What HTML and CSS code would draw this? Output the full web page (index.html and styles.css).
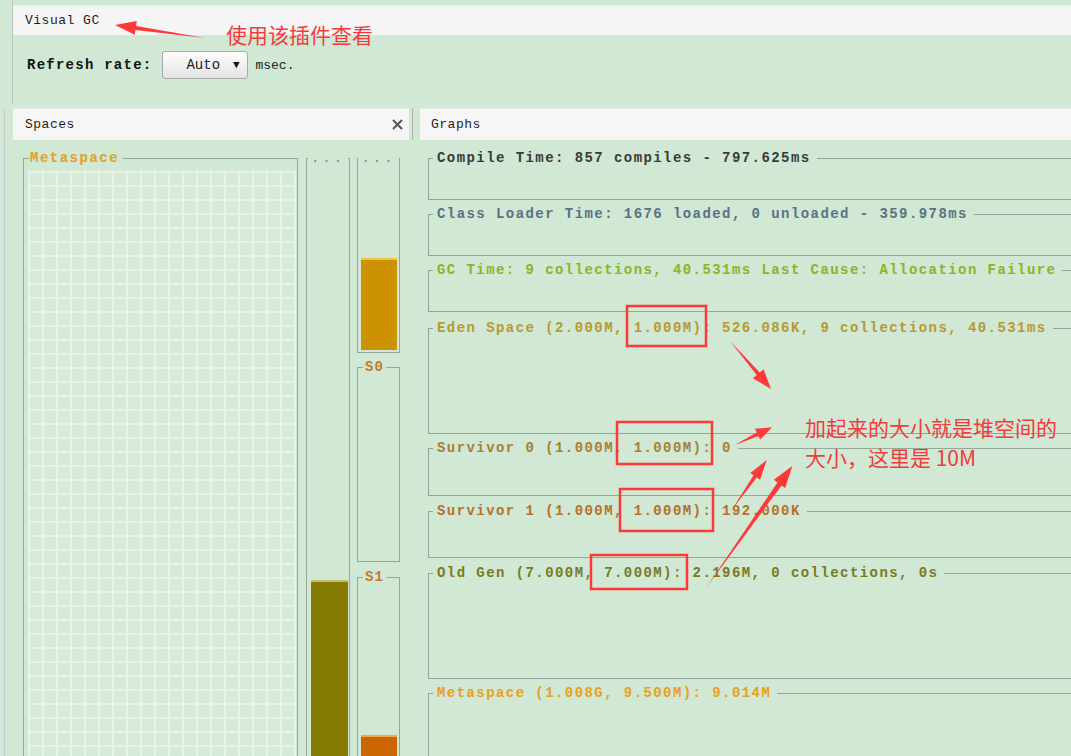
FILE: index.html
```html
<!DOCTYPE html>
<html>
<head>
<meta charset="utf-8">
<title>Visual GC</title>
<link rel="stylesheet" href="styles.css">
</head>
<body>
<div class="app">
  <div class="top">
    <div class="title-bar">Visual GC</div>
    <div class="refresh">
      <span class="refresh-label">Refresh rate:</span>
      <span class="combo"><span class="combo-text">Auto</span><span class="combo-arrow">&#9660;</span></span>
      <span class="unit">msec.</span>
    </div>
  </div>
  <div class="panels">
    <section class="panel spaces">
      <div class="panel-head spaces-head">
        <span>Spaces</span>
        <svg class="close" width="11" height="11" viewBox="0 0 11 11"><path d="M1 1 L10 10 M10 1 L1 10" stroke="#555" stroke-width="2" fill="none"/></svg>
      </div>
      <div class="spaces-body">
        <div class="box meta-box">
          <div class="lbl meta">Metaspace</div>
          <div class="grid"></div>
        </div>
        <div class="box old-col">
          <div class="lbl dots">...</div>
          <div class="fill"></div>
          <div class="bar old-bar"></div>
        </div>
        <div class="col3">
          <div class="box eden-col">
            <div class="lbl dots">...</div>
            <div class="fill"></div>
            <div class="bar eden-bar"></div>
          </div>
          <div class="box s0-col">
            <div class="lbl sname">S0</div>
          </div>
          <div class="box s1-col">
            <div class="lbl sname">S1</div>
            <div class="fill"></div>
            <div class="bar s1-bar"></div>
          </div>
        </div>
      </div>
    </section>
    <div class="splitter"></div>
    <section class="panel graphs">
      <div class="panel-head graphs-head"><span>Graphs</span></div>
      <div class="graphs-body">
        <div class="gbox g-compile"><div class="lbl c-compile">Compile Time: 857 compiles - 797.625ms</div></div>
        <div class="gbox g-class"><div class="lbl c-class">Class Loader Time: 1676 loaded, 0 unloaded - 359.978ms</div></div>
        <div class="gbox g-gc"><div class="lbl c-gc">GC Time: 9 collections, 40.531ms Last Cause: Allocation Failure</div></div>
        <div class="gbox g-eden"><div class="lbl c-eden">Eden Space (2.000M, 1.000M): 526.086K, 9 collections, 40.531ms</div></div>
        <div class="gbox g-s0"><div class="lbl c-s0">Survivor 0 (1.000M, 1.000M): 0</div></div>
        <div class="gbox g-s1"><div class="lbl c-s1">Survivor 1 (1.000M, 1.000M): 192.000K</div></div>
        <div class="gbox g-old"><div class="lbl c-old">Old Gen (7.000M, 7.000M): 2.196M, 0 collections, 0s</div></div>
        <div class="gbox g-meta"><div class="lbl c-meta">Metaspace (1.008G, 9.500M): 9.014M</div></div>
      </div>
    </section>
  </div>
</div>

<svg class="annot" width="1071" height="756" viewBox="0 0 1071 756">
  <g fill="#ff3838">
    <polygon points="205,38 136.1,25.9 136.8,21.0 115,25 134.8,34.8 135.5,29.9"/>
    <polygon points="730,341 759.7,372.4 763.6,369.2 771,389 752.8,378.2 756.7,375.0"/>
    <polygon points="735,445 758.5,436.0 760.2,439.6 772,427.3 755.0,428.8 756.7,432.4"/>
    <polygon points="731.7,510 756.8,477.5 760.1,479.8 766.7,460 750.3,473.0 753.6,475.3"/>
    <polygon points="706,588 781.5,485.4 785.2,488.0 792.3,466 773.8,479.8 777.5,482.4"/>
  </g>
  <g fill="none" stroke="#ff3838" stroke-width="2.5">
    <rect x="627" y="306" width="79" height="40"/>
    <rect x="617" y="422" width="95" height="42"/>
    <rect x="620" y="489" width="93" height="42"/>
    <rect x="591" y="555" width="96" height="34"/>
  </g>
</svg>
<div class="note note-top">使用该插件查看</div>
<div class="note note-side">加起来的大小就是堆空间的<br>大小，这里是 10M</div>
</body>
</html>
```

FILE: styles.css
```css
* {
  box-sizing: border-box;
}

html,
body {
  margin: 0;
  height: 756px;
  overflow: hidden;
}

body {
  position: relative;
  background: #d0e8d4;
  font-family: "Liberation Mono", "DejaVu Sans Mono", monospace;
  font-size: 14px;
  color: #222;
}

.app {
  height: 756px;
  display: flex;
  flex-direction: column;
}

/* ---------- top ---------- */
.top {
  height: 104px;
  flex: none;
  margin-left: 12px;
  border-left: 1px solid #b9c6be;
  padding-top: 5px;
}

.title-bar {
  height: 30px;
  line-height: 30px;
  background: #f5f5f5;
  border-top: 1px solid #e6ebe6;
  padding-left: 12px;
  font-size: 13px;
  letter-spacing: 0.5px;
  color: #1e1e1e;
}

.refresh {
  margin-top: 16px;
  height: 28px;
  display: flex;
  align-items: center;
  padding-left: 14px;
}

.refresh-label {
  font-weight: bold;
  letter-spacing: 1.25px;
  color: #111;
}

.combo {
  margin-left: 10px;
  width: 86px;
  height: 28px;
  border: 1px solid #a9a9a9;
  border-radius: 3px;
  background: linear-gradient(#fdfdfd, #e4e4e4);
  display: flex;
  align-items: center;
  padding-left: 23px;
}

.combo-text {
  color: #222;
}

.combo-arrow {
  margin-left: 13px;
  font-size: 11px;
  color: #111;
}

.unit {
  margin-left: 7px;
  font-size: 13px;
  color: #222;
}

/* ---------- panels ---------- */
.panels {
  flex: 1;
  min-height: 0;
  display: flex;
  margin-top: 4px;
  margin-left: 4px;
  border-left: 1px solid #c5c9d6;
}

.panel {
  display: flex;
  flex-direction: column;
  min-width: 0;
}

.spaces {
  margin-left: 8px;
  width: 396px;
  flex: none;
}

.graphs {
  flex: 1;
  overflow: hidden;
}

.splitter {
  width: 11px;
  flex: none;
  background: linear-gradient(#a9b6ae, #a9b6ae) no-repeat 3px 0 / 1px 32px;
}

.panel-head {
  height: 32px;
  flex: none;
  background: #f6f6f6;
  border-top: 1px solid #e6ebe6;
  display: flex;
  align-items: center;
  justify-content: space-between;
  font-size: 13px;
  letter-spacing: 0.5px;
  color: #1e1e1e;
}

.spaces-head {
  padding: 0 6px 0 12px;
}

.graphs-head {
  padding-left: 11px;
}

/* ---------- spaces ---------- */
.spaces-body {
  flex: 1;
  display: flex;
  padding: 18px 0 0 10px;
}

.box {
  border: 1px solid #93a89a;
  border-bottom: none;
  display: flex;
  flex-direction: column;
}

.lbl {
  margin-top: -8px;
  height: 14px;
  line-height: 14px;
  align-self: flex-start;
  background: #d0e8d4;
  font-weight: bold;
  white-space: nowrap;
}

.meta-box {
  width: 275px;
}

.lbl.meta {
  margin-left: 5px;
  padding: 0 4px 0 1px;
  color: #e3a11e;
  letter-spacing: 1.5px;
}

.grid {
  flex: 1;
  margin: 5px 1px 0 4px;
  background-color: #d5ebd8;
  background-image:
    linear-gradient(to right, #e8f4e7 2px, transparent 2px),
    linear-gradient(to bottom, #e8f4e7 2px, transparent 2px);
  background-size: 14px 14px;
  background-position: 0 1px;
}

.old-col {
  margin-left: 8px;
  width: 44px;
}

.lbl.dots {
  align-self: center;
  padding: 0 3px;
  font-weight: normal;
  color: #7c8c82;
  letter-spacing: 3px;
}

.fill {
  flex: 1;
}

.col3 {
  margin-left: 7px;
  width: 43px;
  display: flex;
  flex-direction: column;
}

.eden-col {
  height: 195px;
  border-bottom: 1px solid #93a89a;
}

.s0-col {
  margin-top: 14px;
  height: 195px;
  border-bottom: 1px solid #93a89a;
}

.s1-col {
  margin-top: 15px;
  flex: 1;
}

.lbl.sname {
  margin-left: 5px;
  padding: 0 2px;
  color: #c47a2e;
  letter-spacing: 1px;
}

.bar {
  flex: none;
}

.old-bar {
  height: 176px;
  margin: 0 1px 0 4px;
  background: #857b04;
  border-top: 2px solid #c4bc6a;
}

.eden-bar {
  height: 92px;
  margin: 0 2px 2px 3px;
  background: #cc9200;
  border-top: 2px solid #f0c43e;
}

.s1-bar {
  height: 21px;
  margin: 0 2px 0 3px;
  background: #cc6600;
  border-top: 2px solid #f0a64a;
}

/* ---------- graphs ---------- */
.graphs-body {
  flex: 1;
  display: flex;
  flex-direction: column;
  padding-top: 18px;
  overflow: hidden;
}

.gbox {
  flex: none;
  margin-left: 8px;
  border: 1px solid #94a89a;
  border-right: none;
  display: flex;
  flex-direction: column;
}

.gbox .lbl {
  margin-left: 4px;
  padding: 0 6px 0 4px;
  letter-spacing: 1.43px;
}

.g-compile { height: 42px; }
.g-class { height: 42px; margin-top: 14px; }
.g-gc { height: 42px; margin-top: 14px; }
.g-eden { height: 106px; margin-top: 16px; }
.g-s0 { height: 48px; margin-top: 14px; }
.g-s1 { height: 47px; margin-top: 15px; }
.g-old { height: 106px; margin-top: 15px; }
.g-meta { flex: 1; margin-top: 14px; border-bottom: none; }

.c-compile { color: #3a3a3a; }
.c-class { color: #5a7282; }
.c-gc { color: #8cb426; }
.c-eden { color: #b69a32; }
.c-s0 { color: #a88038; }
.c-s1 { color: #b8702a; }
.c-old { color: #7a7a1e; }
.c-meta { color: #e5a11f; }

/* ---------- annotations ---------- */
.annot {
  position: absolute;
  left: 0;
  top: 0;
  pointer-events: none;
}

.note {
  position: absolute;
  font-family: "Noto Sans CJK SC", "Noto Sans", sans-serif;
  font-size: 21px;
  color: #f23c3c;
  white-space: nowrap;
}

.note-top {
  left: 226px;
  top: 22px;
  line-height: 24px;
}

.note-side {
  left: 805px;
  top: 412px;
  line-height: 30px;
}
```
